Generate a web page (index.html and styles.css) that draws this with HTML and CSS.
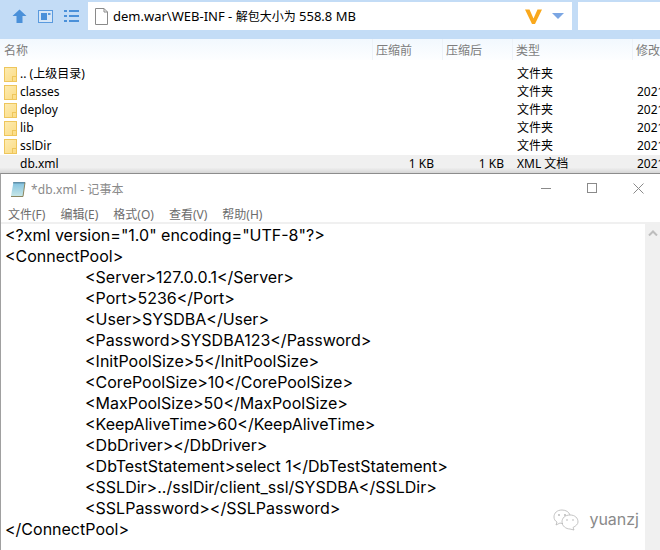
FILE: index.html
```
<!DOCTYPE html>
<html lang="zh">
<head>
<meta charset="utf-8">
<title>db.xml</title>
<link rel="stylesheet" href="styles.css">
</head>
<body>
<div class="screen">
  <div class="toolbar">
    <svg class="tool up" width="15" height="14" viewBox="0 0 15 14"><path d="M7.500 0.500 L14.500 7 H10.500 V14 H4.500 V7 H0.500 Z" fill="#4a90d9"/></svg>
    <svg class="tool panel" width="15" height="13" viewBox="0 0 15 13"><rect x="0.500" y="0.500" width="14" height="12" fill="#d6e6f7" stroke="#5a9ade"/><rect x="3" y="3" width="6" height="7" fill="#4a90d9"/><rect x="10" y="3" width="2.500" height="2" fill="#5a9ade"/></svg>
    <svg class="tool lines" width="15" height="12" viewBox="0 0 15 12"><g fill="#4a90d9"><rect x="0" y="0" width="3" height="2"/><rect x="5" y="0" width="10" height="2"/><rect x="0" y="5" width="3" height="2"/><rect x="5" y="5" width="10" height="2"/><rect x="0" y="10" width="3" height="2"/><rect x="5" y="10" width="10" height="2"/></g></svg>
    <div class="address">
      <svg class="doc" width="13" height="17" viewBox="0 0 13 17"><path d="M0.500 0.500 H9 L12.500 4 V16.500 H0.500 Z" fill="#fff" stroke="#8a8a8a"/><path d="M9 0.500 V4 H12.500" fill="none" stroke="#8a8a8a"/></svg>
      <span class="path">dem.war\WEB-INF - <span class="cjk">解包大小为</span> 558.8 MB</span>
      <svg class="vee" width="17" height="15" viewBox="0 0 17 15"><path d="M0 0.500 H4.500 L8.500 9.500 L12.500 0.500 H17 L10 15 H7 Z" fill="#f9a81c"/></svg>
      <svg width="12" height="6" viewBox="0 0 12 6"><path d="M0 0 H12 L6 6 Z" fill="#7ba6e3"/></svg>
    </div>
    <div class="search"></div>
  </div>

  <div class="cols">
    <div class="col">名称</div>
    <div class="col">压缩前</div>
    <div class="col">压缩后</div>
    <div class="col">类型</div>
    <div class="col">修改</div>
  </div>

  <div class="list">
    <div class="row"><span class="name"><i class="folder"></i>.. (上级目录)</span><span></span><span></span><span class="type">文件夹</span><span></span></div>
    <div class="row"><span class="name"><i class="folder"></i>classes</span><span></span><span></span><span class="type">文件夹</span><span class="date">2021</span></div>
    <div class="row"><span class="name"><i class="folder"></i>deploy</span><span></span><span></span><span class="type">文件夹</span><span class="date">2021</span></div>
    <div class="row"><span class="name"><i class="folder"></i>lib</span><span></span><span></span><span class="type">文件夹</span><span class="date">2021</span></div>
    <div class="row"><span class="name"><i class="folder"></i>sslDir</span><span></span><span></span><span class="type">文件夹</span><span class="date">2021</span></div>
    <div class="row selected"><span class="name"><i class="nofolder"></i>db.xml</span><span class="size">1 KB</span><span class="size">1 KB</span><span class="type">XML 文档</span><span class="date">2021</span></div>
  </div>

  <div class="notepad">
    <div class="titlebar">
      <svg width="16" height="16" viewBox="0 0 16 16"><defs><linearGradient id="pad" x1="0" y1="0" x2="0" y2="1"><stop offset="0" stop-color="#7fc0e0"/><stop offset="1" stop-color="#c6e6e6"/></linearGradient></defs><path d="M3.500 1 H15 L13 15 H1 Z" fill="url(#pad)"/><path d="M15 1.500 L13 15.500 H1" fill="none" stroke="#8a8560"/><path d="M4 1 V2.500 M6 1 V2.500 M8 1 V2.500 M10 1 V2.500 M12 1 V2.500 M14 1 V2.500" stroke="#3f5f70"/></svg>
      <span class="title">*db.xml - 记事本</span>
      <div class="winbtns">
        <svg width="11" height="11" viewBox="0 0 11 11"><path d="M0 5.500 H10" stroke="#8a8a8a"/></svg>
        <svg width="11" height="11" viewBox="0 0 11 11"><rect x="0.500" y="0.500" width="9" height="9" fill="none" stroke="#8a8a8a"/></svg>
        <svg width="11" height="11" viewBox="0 0 11 11"><path d="M0.500 0.500 L10.500 10.500 M10.500 0.500 L0.500 10.500" stroke="#8a8a8a"/></svg>
      </div>
    </div>
    <div class="menu">
      <span>文件(F)</span><span>编辑(E)</span><span>格式(O)</span><span>查看(V)</span><span>帮助(H)</span>
    </div>
    <div class="editor">
      <div class="code">
        <div>&lt;?xml version="1.0" encoding="UTF-8"?&gt;</div>
        <div>&lt;ConnectPool&gt;</div>
        <div class="in">&lt;Server&gt;127.0.0.1&lt;/Server&gt;</div>
        <div class="in">&lt;Port&gt;5236&lt;/Port&gt;</div>
        <div class="in">&lt;User&gt;SYSDBA&lt;/User&gt;</div>
        <div class="in">&lt;Password&gt;SYSDBA123&lt;/Password&gt;</div>
        <div class="in">&lt;InitPoolSize&gt;5&lt;/InitPoolSize&gt;</div>
        <div class="in">&lt;CorePoolSize&gt;10&lt;/CorePoolSize&gt;</div>
        <div class="in">&lt;MaxPoolSize&gt;50&lt;/MaxPoolSize&gt;</div>
        <div class="in">&lt;KeepAliveTime&gt;60&lt;/KeepAliveTime&gt;</div>
        <div class="in">&lt;DbDriver&gt;&lt;/DbDriver&gt;</div>
        <div class="in">&lt;DbTestStatement&gt;select 1&lt;/DbTestStatement&gt;</div>
        <div class="in">&lt;SSLDir&gt;../sslDir/client_ssl/SYSDBA&lt;/SSLDir&gt;</div>
        <div class="in">&lt;SSLPassword&gt;&lt;/SSLPassword&gt;</div>
        <div>&lt;/ConnectPool&gt;</div>
      </div>
      <div class="scroll">
        <svg width="10" height="6" viewBox="0 0 10 6"><path d="M1 5.500 L5 1.500 L9 5.500" fill="none" stroke="#bdbdbd" stroke-width="2"/></svg>
      </div>
      <div class="mark">
        <svg width="28" height="24" viewBox="0 0 28 24"><g fill="none" stroke="#b5b5b5" stroke-width="0.8"><path d="M9 3 C4 3 1 6 1 10 C1 12 2 14 4 15 L3 18 L7 16 C8 16.500 9 16.500 10 16.500"/><path d="M9 3 C13 3 16 5 17 8"/><path d="M17 8 C12 8 9 11 9 15 C9 19 13 22 17 22 L21 23 L20 20.500 C23 19 25 17 25 15 C25 11 22 8 17 8Z"/></g><g fill="#b5b5b5"><circle cx="6" cy="8" r="0.9"/><circle cx="12" cy="8" r="0.9"/><circle cx="14" cy="13" r="0.8"/><circle cx="20" cy="13" r="0.8"/></g></svg>
        <span>yuanzj</span>
      </div>
    </div>
  </div>
</div>
</body>
</html>
```
FILE: styles.css
```
* { box-sizing: border-box; }
html, body { margin: 0; padding: 0; }
.screen {
  width: 660px; height: 550px; overflow: hidden;
  display: flex; flex-direction: column;
  background: #fff; color: #000;
  font-family: "Noto Sans", "Noto Sans CJK SC", sans-serif;
  font-size: 12px;
}
.toolbar {
  height: 39px; flex: none;
  background: #c3dcf6;
  display: flex; align-items: flex-start;
  padding: 2px 0 0 12px;
}
.tool { flex: none; }
.up { margin: 7px 11px 0 0; }
.panel { margin: 8px 11px 0 0; }
.lines { margin: 8px 9px 0 0; }
.address {
  width: 484px; height: 28px; flex: none;
  background: #fff;
  display: flex; align-items: center;
  padding: 0 8px 0 7px;
}
.doc { flex: none; margin-right: 5px; }
.path { flex: 1; font-size: 13px; }
.cjk { font-size: 12px; }
.vee { margin-right: 10px; }
.search { flex: 1; height: 28px; margin-left: 6px; background: #fff; }
.cols {
  height: 21px; flex: none;
  display: grid; grid-template-columns: 372px 70px 70px 120px 28px;
  background: linear-gradient(#f2f8fe, #fdfeff);
  color: #7d7d7d;
  line-height: 23px;
  white-space: nowrap;
}
.col { padding-left: 3px; border-left: 1px solid #edf2f8; overflow: hidden; }
.col:first-child { padding-left: 4px; border-left: 0; }
.list { height: 113px; flex: none; padding-top: 5px; }
.row {
  height: 18px; line-height: 18px;
  display: grid; grid-template-columns: 373px 69px 70px 120px 28px;
  font-size: 12px;
}
.row > span { white-space: nowrap; }
.row > .type { padding-left: 5px; }
.row > .date { padding-left: 5px; overflow: hidden; }
.name { display: flex; align-items: center; padding-left: 4px; }
.folder {
  width: 13px; height: 15px; margin-right: 3px; position: relative;
  background: linear-gradient(135deg, #fdebb0, #fbdc85);
  border: 1px solid #eec65c;
}
.folder::after {
  content: ""; position: absolute; right: 0; bottom: 0;
  width: 3px; height: 4px; border-left: 1px solid #eec65c; border-top: 1px solid #eec65c;
}
.nofolder { width: 16px; }
.size { text-align: right; padding-right: 8px; }
.selected { background: linear-gradient(#f0f0f0 70%, #d6d6d6); }
.notepad {
  flex: 1; min-height: 0;
  display: flex; flex-direction: column;
  border-top: 1px solid #8c8c8c;
  border-left: 1px solid #a0a0a0;
}
.titlebar { height: 29px; flex: none; display: flex; align-items: center; padding-left: 9px; }
.title { margin-left: 5px; color: #8a8a8a; font-size: 12px; letter-spacing: 0.1px; }
.winbtns { margin-left: auto; display: flex; gap: 35px; padding-right: 16px; }
.menu { height: 19px; flex: none; display: flex; gap: 15px; padding: 3px 0 0 7px; color: #6d6d6d; font-size: 12px; line-height: 17px; }
.editor { flex: 1; min-height: 0; position: relative; display: flex; border-top: 2px solid #f0f0f0; }
.code { flex: 1; padding: 1px 0 0 4px; font-family: Inter, "Noto Sans", sans-serif; font-size: 16px; line-height: 21px; white-space: nowrap; }
.in { padding-left: 80px; }
.scroll { width: 15px; flex: none; background: #f0f0f0; display: flex; justify-content: center; padding-top: 6px; }
.mark { position: absolute; right: 21px; top: 283px; display: flex; align-items: center; gap: 8px; color: #8a8a8a; font-family: Inter, sans-serif; font-size: 16px; }
```
